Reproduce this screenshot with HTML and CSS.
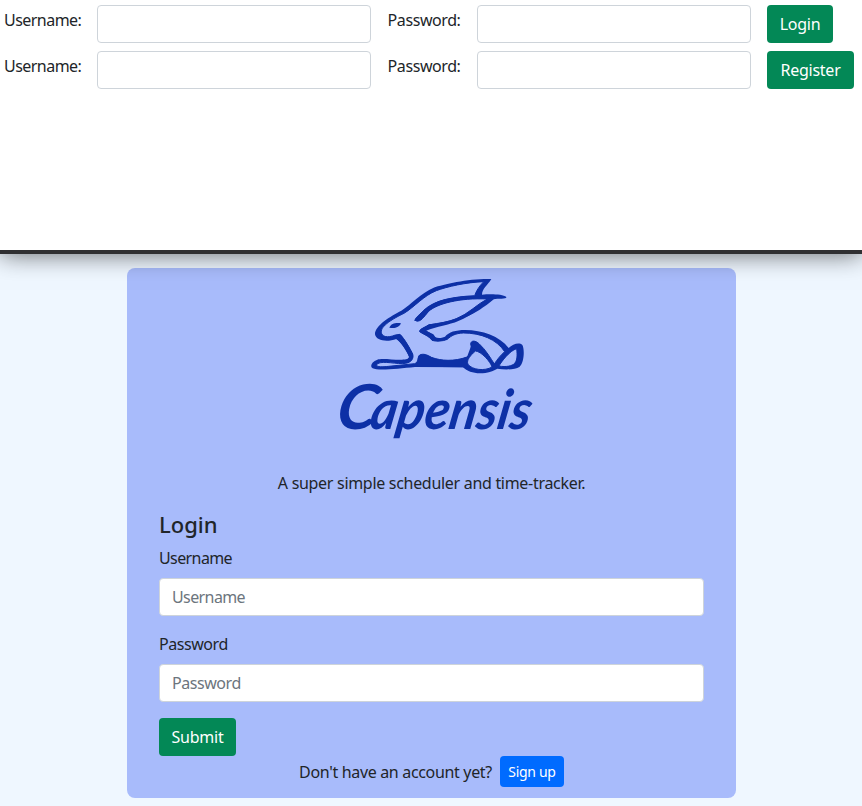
FILE: index.html
```html
<!DOCTYPE html>
<html lang="en">
<head>
<meta charset="utf-8">
<title>Capensis</title>
<link rel="stylesheet" href="styles.css">
</head>
<body>
<header class="topbar">
  <form class="quick-form">
    <label for="lu">Username:</label><input id="lu" class="field" type="text">
    <label for="lp">Password:</label><input id="lp" class="field" type="password">
    <button class="btn login" type="button">Login</button>
  </form>
  <form class="quick-form">
    <label for="ru">Username:</label><input id="ru" class="field" type="text">
    <label for="rp">Password:</label><input id="rp" class="field" type="password">
    <button class="btn register" type="button">Register</button>
  </form>
</header>
<main class="card">
  <svg class="logo" viewBox="0 0 230 203" role="img" aria-label="Capensis">
    <g transform="translate(30 2) scale(.33333)" stroke="#0d30a6" stroke-width="3" stroke-linejoin="round">
      <path fill="#0d30a6" stroke="none" d="M394 27C330 25 252 42 221 53C184 68 151 105 124 122C91 139 44 167 45 193C48 213 82 217 109 207C124 217 142 247 148 262C140 278 72 262 52 269C34 276 29 288 38 295C54 303 116 296 165 291L309 292C323 306 347 313 376 309C391 307 403 300 412 296C438 300 465 299 479 290C493 278 494 236 487 225C477 215 458 223 446 234C419 198 366 180 316 180C286 180 267 186 255 200C239 207 226 205 218 196C214 188 203 185 198 182C230 169 268 165 295 153C337 137 372 103 401 88C414 84 441 89 439 81C428 72 391 72 366 74C366 55 384 45 394 27Z"/>
      <path fill="#a8bbfb" d="M371 35C319 37 261 50 229 62C191 77 162 112 132 130C101 145 61 168 64 187C65 200 82 205 106 195L120 193C133 205 152 239 158 252C162 264 155 277 137 280C111 284 70 271 53 281C43 290 60 292 86 289L164 281C177 277 172 260 179 255C190 250 201 254 214 262C244 273 282 275 321 261C334 251 337 242 332 222C333 210 347 211 358 222C376 238 393 266 403 282C412 267 424 254 434 245C410 208 363 189 310 189C286 190 274 197 262 208C250 214 226 215 216 211C209 199 185 190 179 185C178 177 191 175 205 165C238 159 267 156 289 146C325 132 353 101 382 87C299 83 232 101 206 124C191 141 183 156 169 153C158 148 178 136 191 121C224 89 284 80 344 77C348 64 358 48 371 35Z"/>
      <path fill="#0d30a6" stroke="none" d="M172 290C176 277 169 263 179 256C192 250 204 257 217 263C246 274 284 276 321 261L337 218L405 284L376 305L309 292Z"/>
      <path fill="#0d30a6" stroke="none" d="M102 198L121 194C134 208 153 239 158 252C162 268 151 279 134 280L120 272C137 272 145 268 147 260C140 242 125 218 109 207Z"/>
      <path fill="#a8bbfb" d="M346 243C332 256 318 270 324 283C337 300 374 304 396 291C392 276 364 244 346 243Z"/>
      <path fill="#a8bbfb" d="M470 236C449 242 424 275 417 288C438 292 457 288 464 280C474 269 471 246 470 236Z"/>
      <path fill="#0d30a6" stroke="none" d="M88 173C94 160 107 158 123 160C119 172 103 177 88 173ZM162 152C185 124 219 91 270 85C324 74 351 80 391 80L382 87C299 83 232 101 206 124C191 141 183 156 169 153ZM179 185C178 177 191 173 208 163C267 156 303 145 354 111L388 83L401 88C343 137 300 153 208 174L198 182L220 193L228 204H252L262 208C250 214 226 215 216 211C209 199 185 190 179 185Z"/>
    </g>
    <text class="wordmark" transform="translate(28 0) skewX(-10)"><tspan class="initial" x="5" y="161" textLength="40" lengthAdjust="spacingAndGlyphs">C</tspan><tspan x="39" y="161" textLength="160" lengthAdjust="spacingAndGlyphs">apensis</tspan></text>
  </svg>
  <p class="tagline">A super simple scheduler and time-tracker.</p>
  <form>
    <h1>Login</h1>
    <label class="caption" for="user">Username</label>
    <input id="user" class="field" type="text" placeholder="Username">
    <label class="caption password" for="pass">Password</label>
    <input id="pass" class="field password" type="password" placeholder="Password">
    <button class="btn submit" type="button">Submit</button>
  </form>
  <div class="signup"><span>Don't have an account yet?</span><button class="btn small" type="button">Sign up</button></div>
</main>
</body>
</html>
```
FILE: styles.css
```css
* { box-sizing: border-box; }
body { margin: 0; background: #eff7ff; color: #212529; font: 16px/24px "Noto Sans", sans-serif; letter-spacing: -.6px; }
input, button { font: inherit; letter-spacing: inherit; }
.topbar { height: 254px; padding: 5px 0 0 4px; background: #fff; border-bottom: 4px solid #303032; box-shadow: 0 0 24px rgba(0,0,0,.6); position: relative; }
.quick-form { display: grid; grid-template-columns: 93px 274px 106px 274px auto; height: 38px; margin-bottom: 8px; justify-content: start; }
.quick-form label { padding-top: 3px; letter-spacing: -.53px; }
.quick-form label:nth-of-type(2) { margin-left: 16.6px; white-space: nowrap; letter-spacing: -.42px; }
.quick-form .btn { margin-left: 16px; }
.field { display: block; width: 100%; height: 38px; padding: 6px 12px; border: 1px solid #ced4da; border-radius: 4px; background: #fff; color: #212529; }
.field::placeholder { color: #6c757d; opacity: 1; }
.password { letter-spacing: -.45px; }
.btn { display: block; height: 38px; padding: 0; border: 0; border-radius: 4px; background: #038856; color: #fff; text-align: center; white-space: nowrap; letter-spacing: -.25px; }
.login { width: 66px; }
.register { width: 87px; }
.submit { width: 77px; }
.card { width: 609px; height: 530px; margin: 14px auto 0 127px; padding: 0 32px; border-radius: 8px; background: #a8bbfb; }
.logo { display: block; width: 230px; height: 203px; margin-left: 171px; overflow: visible; }
.wordmark { font: italic 700 55px Lato, sans-serif; letter-spacing: 0; fill: #0d30a6; }
.initial { font-size: 62px; }
.tagline { margin: 0 0 18px; text-align: center; letter-spacing: -.3px; }
h1 { margin: 0 0 8px; font-size: 22px; line-height: 25px; font-weight: 500; letter-spacing: 0; position: relative; top: -1px; }
.caption { display: block; margin-bottom: 8px; }
form .field { margin-bottom: 16px; }
.signup { display: flex; justify-content: center; align-items: center; height: 31px; letter-spacing: -.33px; }
.small { width: 64px; height: 31px; margin-left: 8px; background: #006bff; font-size: 14px; line-height: 21px; letter-spacing: -.3px; }
```
